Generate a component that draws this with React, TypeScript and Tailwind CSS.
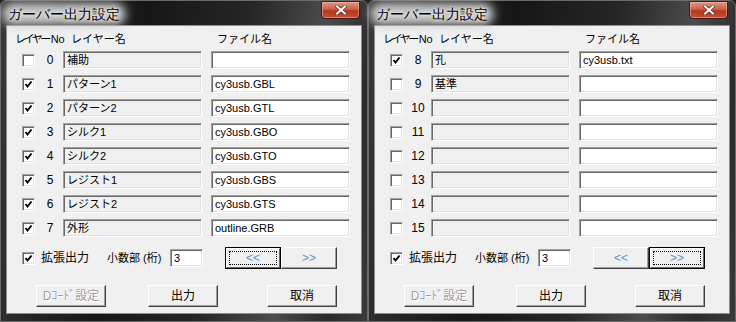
type Row = { no: number; checked: boolean; name: string; file: string };

const leftRows: Row[] = [
  { no: 0, checked: false, name: '補助', file: '' },
  { no: 1, checked: true, name: 'パターン1', file: 'cy3usb.GBL' },
  { no: 2, checked: true, name: 'パターン2', file: 'cy3usb.GTL' },
  { no: 3, checked: true, name: 'シルク1', file: 'cy3usb.GBO' },
  { no: 4, checked: true, name: 'シルク2', file: 'cy3usb.GTO' },
  { no: 5, checked: true, name: 'レジスト1', file: 'cy3usb.GBS' },
  { no: 6, checked: true, name: 'レジスト2', file: 'cy3usb.GTS' },
  { no: 7, checked: true, name: '外形', file: 'outline.GRB' },
];

const rightRows: Row[] = [
  { no: 8, checked: true, name: '孔', file: 'cy3usb.txt' },
  { no: 9, checked: false, name: '基準', file: '' },
  { no: 10, checked: false, name: '', file: '' },
  { no: 11, checked: false, name: '', file: '' },
  { no: 12, checked: false, name: '', file: '' },
  { no: 13, checked: false, name: '', file: '' },
  { no: 14, checked: false, name: '', file: '' },
  { no: 15, checked: false, name: '', file: '' },
];

function CheckBox({ checked }: { checked: boolean }) {
  return (
    <div className="flex h-[13px] w-[13px] shrink-0 items-center justify-center border border-t-[#a0a0a0] border-l-[#a0a0a0] border-r-white border-b-white bg-white shadow-[inset_1px_1px_0_#696969,inset_-1px_-1px_0_#e3e3e3]">
      {checked && (
        <svg width="9" height="9" viewBox="0 0 9 9">
          <path d="M1.5 4 L3.5 6.5 L7.5 1.5" fill="none" stroke="#000" strokeWidth="2" />
        </svg>
      )}
    </div>
  );
}

function Edit({ value, white, w, latin }: { value: string; white: boolean; w: string; latin?: boolean }) {
  return (
    <div
      className={`flex h-[18px] shrink-0 items-center border border-t-[#a0a0a0] border-l-[#a0a0a0] border-r-white border-b-white pl-[3px] text-[11px] leading-none text-black shadow-[inset_1px_1px_0_#696969,inset_-1px_-1px_0_#e3e3e3] ${w} ${
        white ? 'bg-white' : 'bg-[#f0f0f0]'
      } ${latin ? 'text-[11.5px]' : ''}`}
    >
      {value}
    </div>
  );
}

function Button({ label, w, disabled, focused, blue }: { label: string; w: string; disabled?: boolean; focused?: boolean; blue?: boolean }) {
  const txt = disabled
    ? 'text-[#a0a0a0] [text-shadow:1px_1px_0_#fff]'
    : blue
    ? 'text-[#6a8fc6]'
    : 'text-black';
  if (focused) {
    return (
      <div className={`h-[22px] shrink-0 border border-black ${w}`}>
        <div className="flex h-full w-full items-center justify-center border border-t-white border-l-white border-r-[#696969] border-b-[#696969] bg-[#f0f0f0] p-[2px]">
          <div className={`flex h-full w-full items-center justify-center border border-dotted border-black text-[12px] ${txt}`}>
            {label}
          </div>
        </div>
      </div>
    );
  }
  return (
    <div
      className={`flex h-[22px] shrink-0 items-center justify-center border border-t-white border-l-white border-r-[#404040] border-b-[#404040] bg-[#f0f0f0] text-[12px] shadow-[inset_-1px_-1px_0_#a0a0a0] ${w} ${txt}`}
    >
      {label}
    </div>
  );
}

function Dialog({ rows, focus }: { rows: Row[]; focus: 'prev' | 'next' }) {
  return (
    <div className="relative flex h-[322px] w-[368px] shrink-0 flex-col rounded-t-[6px] border border-[#6a6a6a] bg-[linear-gradient(100deg,#3a3a3a_0%,#161616_35%,#262626_60%,#4c4c4c_78%,#2a2a2a_90%,#3a3a3a_100%)] px-[6px] pb-[8px]">
      {/* title bar */}
      <div className="flex h-[25px] shrink-0 items-center pl-[1px]">
        <span className="relative text-[14px] leading-none text-black">
          <span className="absolute -inset-x-[6px] -inset-y-[4px] rounded-full bg-[#c4c4c4] blur-[5px]" />
          <span className="relative [text-shadow:0_0_3px_#fff,0_0_6px_#eee]">ガーバー出力設定</span>
        </span>
      </div>
      <div className="absolute right-[7px] top-[0px] flex h-[18px] w-[39px] items-center justify-center rounded-b-[4px] border border-[#4a1810] bg-[linear-gradient(180deg,#e09a88_0%,#cc6048_45%,#b4381f_55%,#c4513a_100%)] shadow-[inset_0_0_0_1px_rgba(255,200,190,0.45)]">
        <svg width="12" height="10" viewBox="0 0 12 10">
          <path d="M2 1.5 L10 8.5 M10 1.5 L2 8.5" stroke="#5a2a20" strokeWidth="3.4" strokeLinecap="square" />
          <path d="M2 1.5 L10 8.5 M10 1.5 L2 8.5" stroke="#fff" strokeWidth="2" strokeLinecap="square" />
        </svg>
      </div>

      {/* client */}
      <div className="flex flex-1 flex-col bg-[#f0f0f0] font-['Liberation_Sans','Noto_Sans_CJK_JP',sans-serif] text-black shadow-[0_0_0_1px_#8e8e8e]">
        <div className="flex h-[22px] shrink-0 items-start pl-[8px] pt-[6px] text-[11px] leading-[14px]">
          <span className="w-[56px]">
            <span className="tracking-[-2.5px]">レイヤー</span>
            <span className="ml-[2px]">No</span>
          </span>
          <span className="w-[146px]">レイヤー名</span>
          <span>ファイル名</span>
        </div>

        {rows.map((r) => (
          <div key={r.no} className="flex h-[24px] shrink-0 items-center pl-[15px]">
            <CheckBox checked={r.checked} />
            <span className="w-[28px] pl-[2px] text-center text-[12px]">{r.no}</span>
            <Edit value={r.name} white={false} w="w-[139px]" />
            <div className="w-[9px]" />
            <Edit value={r.file} white w="w-[139px]" latin />
          </div>
        ))}

        <div className="mt-[6px] flex h-[24px] shrink-0 items-center pl-[15px] text-[11px]">
          <CheckBox checked />
          <span className="ml-[6px] w-[66px] text-[12px]">拡張出力</span>
          <span className="w-[63px]">小数部 (桁)</span>
          <Edit value="3" white w="w-[33px]" latin />
          <div className="ml-[22px] flex">
            <Button label="<<" w="w-[56px]" blue focused={focus === 'prev'} />
            <Button label=">>" w="w-[56px]" blue focused={focus === 'next'} />
          </div>
        </div>

        <div className="mt-[15px] flex h-[22px] shrink-0 items-center pl-[29px]">
          <Button label="Dｺｰﾄﾞ設定" w="w-[70px]" disabled />
          <div className="ml-[42px]">
            <Button label="出力" w="w-[70px]" />
          </div>
          <div className="ml-[49px]">
            <Button label="取消" w="w-[70px]" />
          </div>
        </div>
      </div>
    </div>
  );
}

export default function App() {
  return (
    <div className="flex h-[322px] w-[736px] overflow-hidden bg-[#1a1a1a]">
      <Dialog rows={leftRows} focus="prev" />
      <Dialog rows={rightRows} focus="next" />
    </div>
  );
}
